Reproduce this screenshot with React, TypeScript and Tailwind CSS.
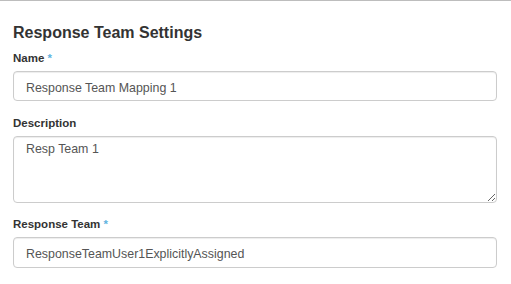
export default function App() {
  return (
    <div
      className="h-[284px] w-[511px] overflow-hidden border-t border-[#bdbdbd] bg-white pl-[13px] pr-[14px] text-[#333]"
      style={{ fontFamily: '"Liberation Sans", Arial, sans-serif' }}
    >
      <h2 className="mt-[22px] text-[16px] leading-[20px] font-bold">Response Team Settings</h2>

      <label className="mt-[7px] block text-[11.5px] leading-[16px] font-bold">
        Name <span className="text-[#5fb3e0]">*</span>
      </label>
      <input
        className="mt-[5px] block h-[30px] w-full rounded-[4px] border border-[#ccc] px-3 pt-[3px] text-[12.4px] text-[#555] shadow-[inset_0_1px_1px_rgba(0,0,0,0.075)] outline-none"
        defaultValue="Response Team Mapping 1"
      />

      <label className="mt-[14px] block text-[11.5px] leading-[16px] font-bold">Description</label>
      <textarea
        className="mt-[5px] block h-[67px] w-full rounded-[4px] border border-[#ccc] px-3 pt-[3px] text-[12.4px] leading-[18px] text-[#555] shadow-[inset_0_1px_1px_rgba(0,0,0,0.075)] outline-none"
        defaultValue="Resp Team 1"
      />

      <label className="mt-[13px] block text-[11.5px] leading-[16px] font-bold">
        Response Team <span className="text-[#5fb3e0]">*</span>
      </label>
      <input
        className="mt-[5px] block h-[31px] w-full rounded-[4px] border border-[#ccc] px-3 pt-[3px] text-[12.4px] text-[#555] shadow-[inset_0_1px_1px_rgba(0,0,0,0.075)] outline-none"
        defaultValue="ResponseTeamUser1ExplicitlyAssigned"
      />
    </div>
  );
}
